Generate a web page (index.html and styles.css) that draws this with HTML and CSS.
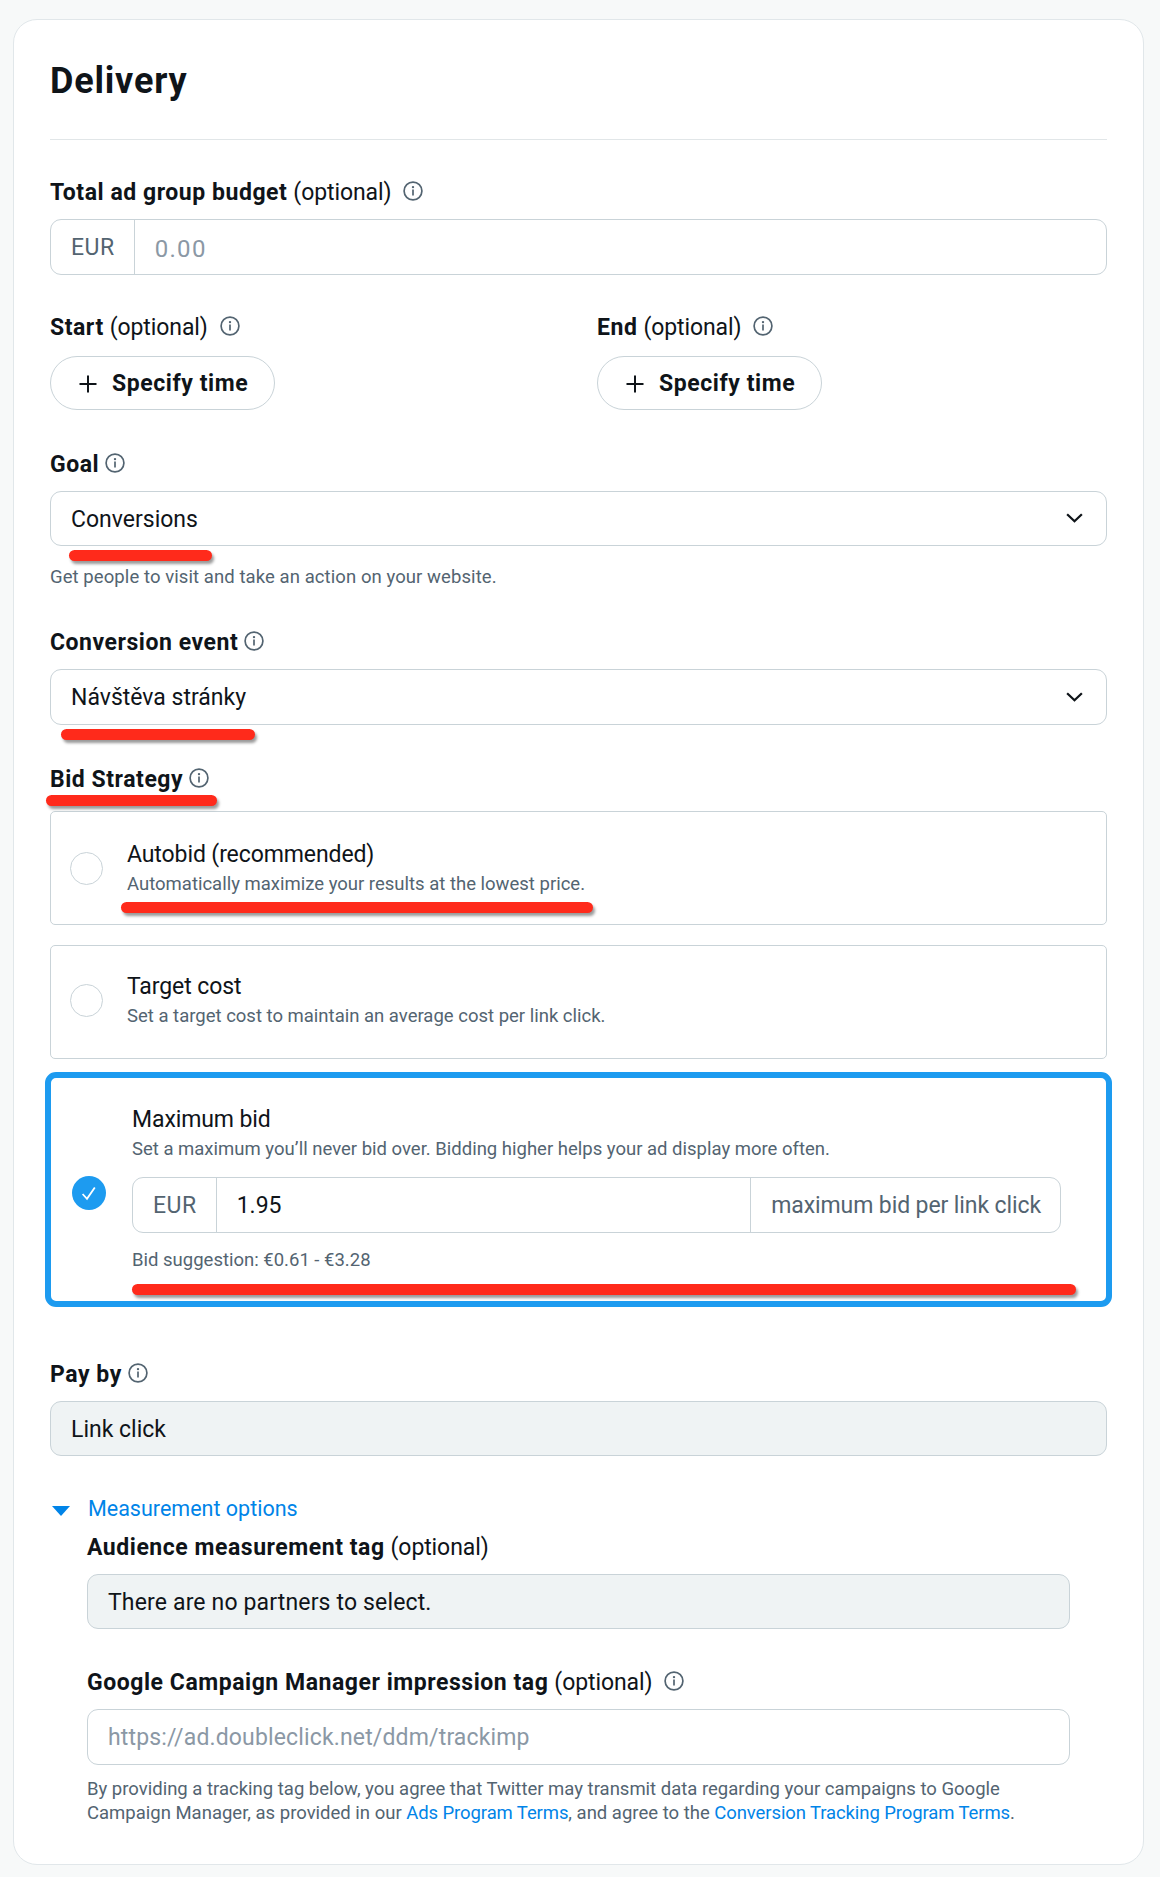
FILE: index.html
```html
<html>
<head>
<meta charset="utf-8">
<link rel="stylesheet" href="styles.css">
<title>
    Delivery
</title>
</head>
<body>
    <svg class="symbols">
        <symbol id="info" viewBox="0 0 20 20">
            <circle cx="10" cy="10" r="8.9" fill="none" stroke="currentColor" stroke-width="1.7" />
            <circle cx="10" cy="6.1" r="1.2" fill="currentColor" />
            <path d="M10 8.4v6.2" fill="none" stroke="currentColor" stroke-width="1.7" />
        </symbol>
        <symbol id="plus" viewBox="0 0 18 18">
            <path d="M9 0.5v17M0.5 9h17" fill="none" stroke="currentColor" stroke-width="2" />
        </symbol>
        <symbol id="chevron" viewBox="0 0 18 10">
            <path d="M1.2 1L9 8.4l7.8-7.4" fill="none" stroke="currentColor" stroke-width="2.4" />
        </symbol>
    </svg>

    <div class="card">
        <h1>Delivery</h1>

        <div class="field">
            <div class="label"><b>Total ad group budget</b> <span class="optional">(optional)</span><svg class="info"><use href="#info" /></svg></div>
            <div class="input">
                <span class="addon">EUR</span>
                <span class="value placeholder digits">0.00</span>
            </div>
        </div>

        <div class="field times">
            <div>
                <div class="label"><b>Start</b> <span class="optional">(optional)</span><svg class="info"><use href="#info" /></svg></div>
                <button class="button"><svg class="plus"><use href="#plus" /></svg>Specify time</button>
            </div>
            <div>
                <div class="label"><b>End</b> <span class="optional">(optional)</span><svg class="info"><use href="#info" /></svg></div>
                <button class="button"><svg class="plus"><use href="#plus" /></svg>Specify time</button>
            </div>
        </div>

        <div class="field goal">
            <div class="label"><b>Goal</b><svg class="info"><use href="#info" /></svg></div>
            <div class="input short">
                <span class="value">Conversions</span>
                <svg class="chevron"><use href="#chevron" /></svg>
            </div>
            <p class="help">Get people to visit and take an action on your website.</p>
            <div class="mark mark-goal"></div>
        </div>

        <div class="field event">
            <div class="label"><b>Conversion event</b><svg class="info"><use href="#info" /></svg></div>
            <div class="input">
                <span class="value">Návštěva stránky</span>
                <svg class="chevron"><use href="#chevron" /></svg>
            </div>
            <div class="mark mark-event"></div>
        </div>

        <div class="field strategy">
            <div class="label"><b>Bid Strategy</b><svg class="info"><use href="#info" /></svg></div>
            <div class="mark mark-strategy"></div>

            <div class="option">
                <span class="radio"></span>
                <div>
                    <div class="title">Autobid (recommended)</div>
                    <div class="small">Automatically maximize your results at the lowest price.</div>
                </div>
                <div class="mark mark-autobid"></div>
            </div>

            <div class="option target">
                <span class="radio"></span>
                <div>
                    <div class="title">Target cost</div>
                    <div class="small">Set a target cost to maintain an average cost per link click.</div>
                </div>
            </div>

            <div class="option selected">
                <svg class="check" viewBox="0 0 34 34">
                    <circle cx="17" cy="17" r="17" fill="#1d9bf0" />
                    <path d="M10.6 18l4.4 4.8 7.8-11.4" fill="none" stroke="#fff" stroke-width="1.8" />
                </svg>
                <div class="bid">
                    <div class="title">Maximum bid</div>
                    <div class="small">Set a maximum you’ll never bid over. Bidding higher helps your ad display more often.</div>
                    <div class="input">
                        <span class="addon">EUR</span>
                        <span class="value">1.95</span>
                        <span class="addon right">maximum bid per link click</span>
                    </div>
                    <div class="small">Bid suggestion: €0.61 - €3.28</div>
                </div>
                <div class="mark mark-bid"></div>
            </div>
        </div>

        <div class="field pay">
            <div class="label"><b>Pay by</b><svg class="info"><use href="#info" /></svg></div>
            <div class="input short disabled"><span class="value">Link click</span></div>
        </div>

        <div class="toggle"><span class="triangle"></span>Measurement options</div>
        <div class="measurement">
            <div class="label"><b>Audience measurement tag</b> <span class="optional">(optional)</span></div>
            <div class="input short disabled"><span class="value wide">There are no partners to select.</span></div>

            <div class="label google"><b>Google Campaign Manager impression tag</b> <span class="optional">(optional)</span><svg class="info"><use href="#info" /></svg></div>
            <div class="input"><span class="value placeholder wide">https://ad.doubleclick.net/ddm/trackimp</span></div>
            <p class="small terms">By providing a tracking tag below, you agree that Twitter may transmit data regarding your campaigns to Google<br>Campaign Manager, as provided in our <a href="#">Ads Program Terms</a>, and agree to the <a href="#">Conversion Tracking Program Terms</a>.</p>
        </div>
    </div>
</body>
</html>
```
FILE: styles.css
```css
* {
    box-sizing: border-box;
}
body {
    margin: 0;
    padding: 19px 0 0 13px;
    background-color: #f7f9f9;
    color: #0f1419;
    font-family: Roboto, Arial, sans-serif;
    font-size: 23px;
    line-height: 28px;
}
.symbols {
    display: none;
}
.card {
    width: 1131px;
    height: 1846px;
    padding: 39px 36px 0;
    border: 1px solid #e1e7ea;
    border-radius: 24px;
    background-color: white;
}
h1 {
    margin: 0;
    padding-bottom: 36px;
    border-bottom: 1px solid #e1e6e8;
    font-size: 36px;
    line-height: 44px;
    letter-spacing: 0.8px;
}
.field {
    position: relative;
    margin-top: 38px;
}
.goal, .strategy {
    margin-top: 40px;
}
.event {
    margin-top: 39px;
}
.pay {
    margin-top: 53px;
}

/* labels */
.label {
    display: flex;
    align-items: center;
    height: 28px;
    margin-bottom: 13px;
}
.label b {
    padding-top: 2px;
    letter-spacing: 0.54px;
}
.optional {
    margin: 0 6px 0 6px;
    padding-top: 2px;
    letter-spacing: -0.1px;
}
.info {
    width: 20px;
    height: 20px;
    margin: 0 0 2px 6px;
    color: #536471;
}

/* inputs */
.input {
    display: flex;
    align-items: center;
    height: 56px;
    border: 1px solid #c9d3d8;
    border-radius: 11px;
    background-color: white;
}
.short {
    height: 55px;
}
.disabled {
    background-color: #eff3f4;
}
.value {
    flex: 1;
    padding: 2px 0 0 20px;
}
.wide {
    letter-spacing: 0.15px;
}
.digits {
    padding-top: 3px;
    font-size: 24px;
    letter-spacing: 1.3px;
}
.placeholder {
    color: #8b98a5;
}
.addon {
    height: 54px;
    padding: 0 19px 0 20px;
    border-right: 1px solid #c9d3d8;
    color: #536471;
    line-height: 56px;
    letter-spacing: 0.5px;
}
.addon.right {
    border-right: 0;
    border-left: 1px solid #c9d3d8;
    letter-spacing: -0.1px;
}
.chevron {
    width: 17px;
    height: 10px;
    margin: 0 23px 1px 0;
}

.times {
    display: grid;
    grid-template-columns: 547px 1fr;
}
.times .label {
    margin-bottom: 15px;
}
.button {
    display: flex;
    align-items: center;
    height: 54px;
    padding: 1px 26px 0 28px;
    border: 1px solid #c9d3d8;
    border-radius: 27px;
    background-color: white;
    color: #0f1419;
    font: bold 23px Roboto, Arial, sans-serif;
    letter-spacing: 0.58px;
}
.plus {
    width: 18px;
    height: 18px;
    margin-right: 15px;
}
.help {
    margin: 19px 0 0;
    letter-spacing: 0.08px;
}
.help, .small {
    color: #536471;
    font-size: 18.5px;
    line-height: 24px;
}

/* bid strategy */
.strategy .label {
    margin-bottom: 18px;
}
.option {
    position: relative;
    display: flex;
    align-items: center;
    gap: 24px;
    height: 114px;
    padding-left: 19px;
    border: 1px solid #c9d3d8;
    border-radius: 5px;
}
.target {
    margin: 20px 0 13px;
    padding-bottom: 3px;
}
.title {
    margin-bottom: 3px;
    letter-spacing: -0.1px;
}
.radio {
    width: 33px;
    height: 33px;
    border: 1px solid #c9d3d8;
    border-radius: 50%;
}
.selected {
    gap: 26px;
    height: 235px;
    margin: 0 -5px;
    padding: 0 45px 1px 21px;
    border: 6px solid #1d9bf0;
    border-radius: 11px;
}
.check {
    width: 34px;
    height: 34px;
    margin-top: 8px;
}
.bid {
    flex: 1;
}
.bid .input {
    margin: 16px 0 15px;
}

/* measurement options */
.toggle {
    display: flex;
    align-items: center;
    margin: 39px 0 10px;
    color: #0084e8;
    font-size: 21.5px;
}
.triangle {
    margin: 3px 18px 0 2px;
    border: 9px solid transparent;
    border-top: 10px solid #0084e8;
    border-bottom: 0;
}
.measurement {
    padding: 0 37px;
}
.google {
    margin-top: 39px;
}
.terms {
    margin: 12px 0 0;
    white-space: nowrap;
}
a {
    color: #0084e8;
    text-decoration: none;
    letter-spacing: -0.1px;
}

/* red marker lines */
.mark {
    position: absolute;
    height: 11px;
    border-radius: 6px;
    background-color: #ff2a1b;
    box-shadow: 2px 3px 3px rgba(0, 0, 0, 0.4);
}
.mark-goal {
    left: 19px;
    top: 100px;
    width: 143px;
}
.mark-event {
    left: 11px;
    top: 101px;
    width: 194px;
}
.mark-strategy {
    left: -4px;
    top: 30px;
    width: 171px;
    z-index: 1;
}
.mark-autobid {
    left: 70px;
    top: 90px;
    width: 472px;
}
.mark-bid {
    left: 81px;
    top: 206px;
    width: 944px;
}
```
